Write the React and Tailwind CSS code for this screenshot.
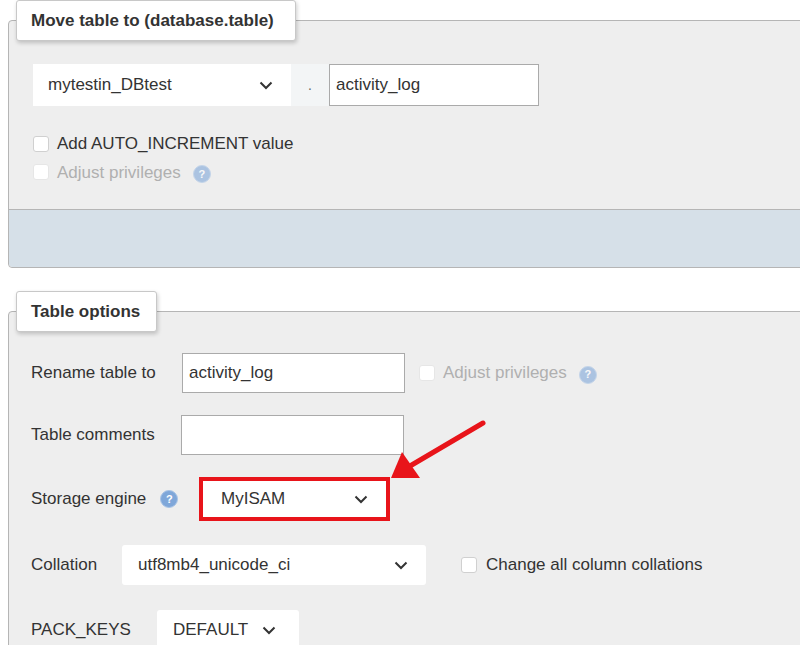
import React from "react";

const Chev = () => (
  <svg width="14" height="9" viewBox="0 0 14 9" fill="none" stroke="#333" strokeWidth="2"><path d="M1.5 1.5l5.5 5.5 5.5-5.5" /></svg>
);
const Help = () => (
  <span className="inline-flex w-[18px] h-[18px] rounded-full bg-[#7fa7d9] border border-[#a9c4e6] text-white text-[11px] font-bold items-center justify-center leading-none">?</span>
);
const Box = ({ faded }) => (
  <span className={"inline-block w-[16px] h-[16px] rounded-[3px] border bg-white " + (faded ? "border-[#e6e6e6] bg-[#f3f3f3]" : "border-[#d0d0d0]")} />
);

export default function App() {
  return (
    <div className="w-[800px] h-[645px] overflow-hidden bg-white relative text-[#333] text-[17px]" style={{ fontFamily: '"Liberation Sans", Arial, sans-serif' }}>
      {/* fieldset 1 */}
      <div className="pt-[20px] pl-[8px]">
        <div className="relative border border-[#b5b5b5] rounded-[4px] bg-[#eeeeee] w-[820px] h-[248px]">
          <div className="absolute left-[7px] -top-[21px] h-[41px] w-[280px] bg-white border border-[#c8c8c8] rounded-[3px] shadow-[1px_2px_4px_rgba(0,0,0,0.2)] font-bold flex items-center pl-[14px] z-10">Move table to (database.table)</div>
          <div className="flex items-stretch pt-[43px] ml-[24px] h-[85px]">
            <div className="w-[258px] bg-white flex items-center justify-between pl-[15px] pr-[18px]">mytestin_DBtest <Chev /></div>
            <div className="w-[38px] bg-[#f3f5f6] flex items-center justify-center text-[14px] text-[#666]">.</div>
            <div className="w-[210px] bg-white border border-[#aaa] flex items-center pl-[6px]">activity_log</div>
          </div>
          <div className="ml-[24px] mt-[25px] flex items-center gap-[8px]"><Box />Add AUTO_INCREMENT value</div>
          <div className="ml-[24px] mt-[3px] flex items-center gap-[8px] text-[#b0b0b0]"><Box faded />Adjust privileges <span className="ml-[4px] opacity-60"><Help /></span></div>
          <div className="absolute left-0 right-0 bottom-0 h-[58px] bg-[#d6e0e8] border-t border-[#b5b5b5] rounded-b-[4px]" />
        </div>
      </div>
      {/* fieldset 2 */}
      <div className="pt-[43px] pl-[8px]">
        <div className="relative border border-[#b5b5b5] rounded-[4px] bg-[#eeeeee] w-[820px] h-[400px]">
          <div className="absolute left-[7px] -top-[21px] h-[41px] w-[141px] bg-white border border-[#c8c8c8] rounded-[3px] shadow-[1px_2px_4px_rgba(0,0,0,0.2)] font-bold flex items-center pl-[14px]">Table options</div>
          <div className="pl-[22px] pt-[41px]">
            <div className="flex items-center h-[40px]">
              <span className="w-[151px]">Rename table to</span>
              <div className="w-[223px] h-[40px] bg-white border border-[#aaa] flex items-center pl-[6px]">activity_log</div>
              <span className="ml-[14px] flex items-center gap-[8px] text-[#b0b0b0]"><Box faded />Adjust privileges <span className="ml-[4px] opacity-60"><Help /></span></span>
            </div>
            <div className="flex items-center h-[40px] mt-[22px]">
              <span className="w-[150px]">Table comments</span>
              <div className="w-[223px] h-[40px] bg-white border border-[#aaa]" />
            </div>
            <div className="flex items-center h-[44px] mt-[22px]">
              <span className="w-[168px] flex items-center gap-[14px]">Storage engine <Help /></span>
              <div className="w-[191px] h-[44px] bg-white border-[4px] border-[#e8141a] flex items-center justify-between pl-[18px] pr-[18px]">MyISAM <Chev /></div>
            </div>
            <div className="flex items-center h-[40px] mt-[24px]">
              <span className="w-[91px]">Collation</span>
              <div className="w-[304px] h-[40px] bg-white rounded-[3px] flex items-center justify-between pl-[16px] pr-[18px]">utf8mb4_unicode_ci <Chev /></div>
              <span className="ml-[35px] flex items-center gap-[9px]"><Box />Change all column collations</span>
            </div>
            <div className="flex items-center h-[40px] mt-[25px]">
              <span className="w-[126px]">PACK_KEYS</span>
              <div className="w-[142px] h-[40px] bg-white rounded-[3px] flex items-center gap-[14px] pl-[16px]">DEFAULT <Chev /></div>
            </div>
          </div>
        </div>
      </div>
      {/* arrow */}
      <svg className="absolute left-0 top-0" width="800" height="645" fill="none">
        <line x1="483" y1="423" x2="410" y2="466" stroke="#e8141a" strokeWidth="5" strokeLinecap="round" />
        <polygon points="391,478 402,452 420,478" fill="#e8141a" />
      </svg>
    </div>
  );
}
